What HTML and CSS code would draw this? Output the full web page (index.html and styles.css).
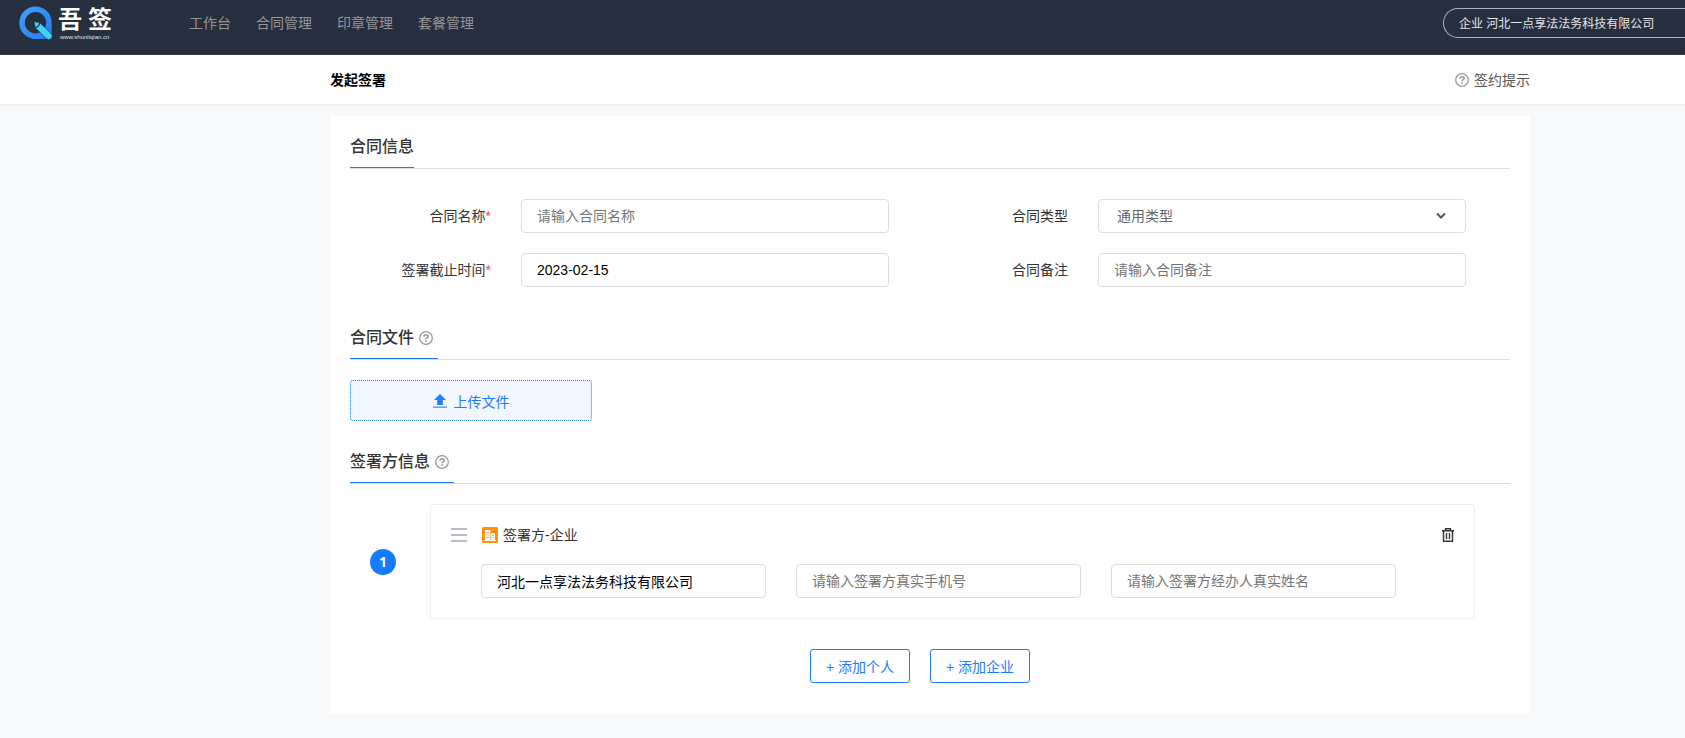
FILE: index.html
```html
<!DOCTYPE html>
<html lang="zh-CN">
<head>
    <meta charset="UTF-8">
    <meta name="viewport" content="width=device-width, initial-scale=1.0">
    <title>发起签署</title>
    <link rel="stylesheet" href="styles.css">
</head>
<body>
    <svg class="sprite" aria-hidden="true">
        <symbol id="icon-help" viewBox="0 0 14 14">
            <circle cx="7" cy="7" r="6.3" fill="none" stroke="currentColor" stroke-width="1.3"/>
            <path d="M4.900 5.700C4.900 4.400 5.800 3.800 7 3.800S9.100 4.500 9.100 5.400C9.100 6.600 7 6.700 7 8.300" fill="none" stroke="currentColor" stroke-width="1.6"/>
            <rect x="6.200" y="9.200" width="1.600" height="1.600" fill="currentColor"/>
        </symbol>
    </svg>

    <header class="header">
        <a href="#" class="logo">
            <svg class="logo-mark" viewBox="0 0 34 34" aria-hidden="true">
                <defs>
                    <linearGradient id="ring" x1="0" y1="0" x2="1" y2="1">
                        <stop offset="0" stop-color="#46a0fb"/>
                        <stop offset="1" stop-color="#1f7bf6"/>
                    </linearGradient>
                </defs>
                <path fill="url(#ring)" fill-rule="evenodd" d="M16.500 0.500A16.200 16.200 0 0 1 32.700 16.700V32.900H16.500A16.200 16.200 0 0 1 16.500 0.500ZM16.500 6A10.700 10.700 0 1 0 16.500 27.400A10.700 10.700 0 1 0 16.500 6Z"/>
                <path fill="#3fd3f5" stroke="#262f3e" stroke-width="0.600" d="M15 15.600L20.800 16.800L32 27.500A3.200 3.200 0 0 1 27.400 32.600L16.300 21.700Z"/>
                <path d="M16.400 21.400Q20.200 21 20.600 17" fill="none" stroke="#262f3e" stroke-width="1.200"/>
            </svg>
            <span class="logo-text">
                <span class="logo-name"><span>吾</span><span>签</span></span>
                <span class="logo-url">www.shunliqian.cn</span>
            </span>
        </a>
        <nav class="nav">
            <a href="#">工作台</a>
            <a href="#">合同管理</a>
            <a href="#">印章管理</a>
            <a href="#">套餐管理</a>
        </nav>
        <a href="#" class="account">企业 河北一点享法法务科技有限公司</a>
    </header>

    <div class="subheader">
        <div class="container subheader-inner">
            <h1>发起签署</h1>
            <a href="#" class="tips"><svg class="icon-help"><use href="#icon-help"/></svg>签约提示</a>
        </div>
    </div>

    <main class="container card">
        <section class="section">
            <div class="section-head"><h2>合同信息</h2></div>
            <form class="form">
                <label for="name">合同名称<em>*</em></label>
                <input class="field" type="text" id="name" placeholder="请输入合同名称">
                <label for="type">合同类型</label>
                <div class="select-box">
                    <select class="field" id="type">
                        <option>通用类型</option>
                    </select>
                    <svg class="chevron" viewBox="0 0 10 8" aria-hidden="true"><path d="M1 1.500L5 5.500L9 1.500" fill="none" stroke="#555" stroke-width="2"/></svg>
                </div>
                <label for="deadline">签署截止时间<em>*</em></label>
                <input class="field" type="text" id="deadline" value="2023-02-15">
                <label for="remark">合同备注</label>
                <input class="field" type="text" id="remark" placeholder="请输入合同备注">
            </form>
        </section>

        <section class="section">
            <div class="section-head">
                <h2 class="has-help">合同文件<svg class="icon-help"><use href="#icon-help"/></svg></h2>
            </div>
            <button type="button" class="upload">
                <svg class="icon-upload" viewBox="0 0 14 14" aria-hidden="true">
                    <path d="M7 0L13 6H9.800V11H4.200V6H1Z" fill="#1f80ff"/>
                    <rect y="12.500" width="14" height="1.500" fill="#5fa2fd"/>
                </svg>
                上传文件
            </button>
        </section>

        <section class="section">
            <div class="section-head">
                <h2 class="has-help">签署方信息<svg class="icon-help"><use href="#icon-help"/></svg></h2>
            </div>
            <div class="signer">
                <span class="signer-index">1</span>
                <div class="signer-card">
                    <div class="signer-head">
                        <svg class="icon-drag" viewBox="0 0 16 14" aria-hidden="true"><path d="M0 1H16M0 7H16M0 13H16" stroke="#bcbcc8" stroke-width="1.800"/></svg>
                        <svg class="icon-company" viewBox="0 0 16 16" aria-hidden="true">
                            <rect width="16" height="16" rx="1.500" fill="#ff8f0c"/>
                            <path d="M3 3H8.500V6H13V13H14V14H2V13H3Z" fill="#fff"/>
                            <path d="M8.700 6V13M4.300 5.500H7.200M4.300 8H7.200M4.300 10.500H7.200M10 8.300H11.800M10 10.700H11.800" fill="none" stroke="#ffab4a" stroke-width="1"/>
                        </svg>
                        <span>签署方-企业</span>
                        <button type="button" class="delete" aria-label="删除">
                            <svg viewBox="0 0 12 14" aria-hidden="true"><path d="M0 2.700H12M3.500 2.500V0.700H8.500V2.500M1.500 3V13.300H10.500V3M4.500 5V11M7.500 5V11" fill="none" stroke="#333" stroke-width="1.400"/></svg>
                        </button>
                    </div>
                    <div class="signer-fields">
                        <input class="field" type="text" aria-label="企业名称" value="河北一点享法法务科技有限公司">
                        <input class="field" type="text" aria-label="手机号" placeholder="请输入签署方真实手机号">
                        <input class="field" type="text" aria-label="经办人姓名" placeholder="请输入签署方经办人真实姓名">
                    </div>
                </div>
            </div>
            <div class="actions">
                <button type="button" class="btn">+ 添加个人</button>
                <button type="button" class="btn">+ 添加企业</button>
            </div>
        </section>
    </main>
</body>
</html>
```
FILE: styles.css
```css
* {
    box-sizing: border-box;
}

body {
    margin: 0;
    font-family: "Liberation Sans", "Noto Sans CJK SC", sans-serif;
    font-size: 14px;
    line-height: 20px;
    color: #333;
    background-color: #f8f9fb;
}

a {
    color: inherit;
    text-decoration: none;
}

h1, h2 {
    margin: 0;
}

button, input, select {
    font-family: inherit;
    font-size: 14px;
}

.sprite {
    display: none;
}

.container {
    max-width: 1200px;
    margin: 0 155px 0 auto;
}

/* header */
.header {
    display: flex;
    align-items: flex-start;
    height: 55px;
    padding-left: 19px;
    background-color: #262f3e;
}

.logo {
    display: flex;
    gap: 5px;
    width: 170px;
    padding-top: 6px;
    color: #fff;
}

.logo-mark {
    width: 34px;
    height: 34px;
}

.logo-text {
    display: flex;
    flex-direction: column;
}

.logo-name {
    display: flex;
    gap: 6px;
    font-size: 24px;
    font-weight: bold;
    line-height: 28px;
}

.logo-url {
    padding-left: 2px;
    font-size: 6px;
    line-height: 6px;
    color: #dfe2e6;
}

.nav {
    display: flex;
    flex: 1;
    gap: 25px;
    padding-top: 13px;
    color: #959595;
}

.account {
    width: 242px;
    height: 30px;
    margin-top: 8px;
    padding-left: 15px;
    border: 1px solid #a9b1c0;
    border-right: none;
    border-radius: 15px 0 0 15px;
    font-size: 12px;
    line-height: 30px;
    color: #e3e5e8;
}

.subheader {
    height: 50px;
    background-color: #fff;
    border-bottom: 1px solid #e9edf1;
    box-shadow: 0 1px 2px #eef1f4;
}

.subheader-inner {
    display: flex;
    justify-content: space-between;
    align-items: center;
    height: 49px;
}

.subheader h1 {
    font-size: 14px;
    color: #000;
}

.tips {
    display: flex;
    align-items: center;
    gap: 5px;
    color: #555;
}

.icon-help {
    width: 14px;
    height: 14px;
    color: #999;
}

/* main card */
.card {
    margin-top: 11px;
    padding: 11px 20px 10px;
    background-color: #fff;
}

.section {
    margin-bottom: 21px;
}

.section-head {
    display: flex;
    border-bottom: 1px solid #ddd;
}

.section-head h2 {
    display: flex;
    align-items: center;
    gap: 5px;
    height: 41px;
    border-bottom: 1px solid #1a7bff;
    font-size: 16px;
    font-weight: 500;
}

.section-head .has-help {
    padding-right: 5px;
}

.form {
    display: grid;
    grid-template-columns: 141px 1fr 149px 1fr;
    gap: 20px 30px;
    align-items: center;
    padding: 30px 44px 10px 0;
}

.form label {
    text-align: right;
}

.form em {
    font-style: normal;
    color: #f33;
}

.field {
    display: block;
    width: 100%;
    height: 34px;
    padding: 0 15px;
    border: 1px solid #ddd;
    border-radius: 4px;
    background-color: #fff;
    color: #000;
    outline: none;
}

.field::placeholder {
    color: #757575;
}

.select-box {
    position: relative;
}

.select-box select {
    padding-left: 18px;
    appearance: none;
    color: #666;
}

.chevron {
    position: absolute;
    top: 13px;
    right: 20px;
    width: 10px;
    height: 8px;
    pointer-events: none;
}

.upload {
    display: flex;
    justify-content: center;
    align-items: center;
    gap: 7px;
    width: 242px;
    height: 41px;
    margin-top: 20px;
    border: 1px dotted #1a7bff;
    border-radius: 3px;
    background-color: #f1f6ff;
    color: #1a7bff;
    cursor: pointer;
}

.icon-upload {
    width: 14px;
    height: 14px;
}

/* signers */
.signer {
    display: flex;
    align-items: center;
    gap: 34px;
    padding: 20px 35px 0 20px;
}

.signer-index {
    width: 26px;
    height: 26px;
    border-radius: 50%;
    background-color: #167bff;
    color: #fff;
    font-family: "Open Sans", sans-serif;
    font-weight: bold;
    line-height: 26px;
    text-align: center;
}

.signer-card {
    flex: 1;
    padding: 20px;
    border: 1px dotted #ddd;
    border-radius: 4px;
}

.signer-head {
    display: flex;
    align-items: center;
    gap: 5px;
    margin-bottom: 19px;
}

.icon-drag {
    width: 16px;
    height: 14px;
    margin-right: 10px;
}

.icon-company {
    width: 16px;
    height: 16px;
}

.delete {
    height: 14px;
    margin-left: auto;
    padding: 0;
    border: none;
    background: none;
    cursor: pointer;
}

.delete svg {
    display: block;
    width: 12px;
    height: 14px;
}

.signer-fields {
    display: grid;
    grid-template-columns: repeat(3, 1fr);
    gap: 30px;
    padding: 0 58px 0 30px;
}

.actions {
    display: flex;
    justify-content: center;
    padding-top: 30px;
}

.btn {
    width: 100px;
    height: 34px;
    margin-right: 20px;
    padding: 0;
    border: 1px solid #1a7bff;
    border-radius: 3px;
    background-color: #fff;
    color: #1a7bff;
    cursor: pointer;
}
```
